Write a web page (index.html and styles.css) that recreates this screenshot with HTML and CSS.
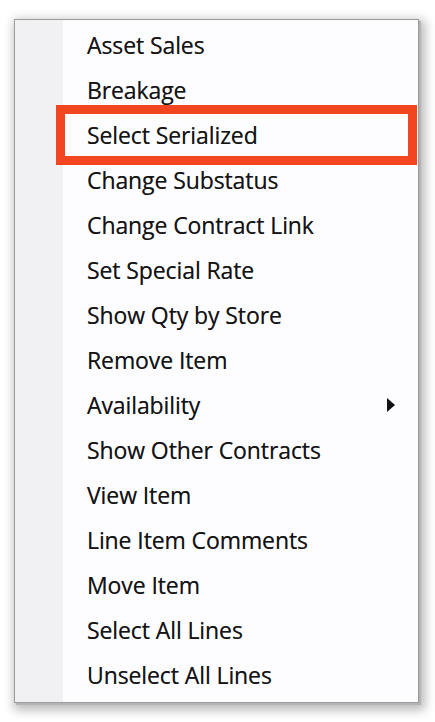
FILE: index.html
```html
<!DOCTYPE html>
<html>
<head>
<meta charset="utf-8">
<link rel="stylesheet" href="styles.css">
</head>
<body>
<div class="menu">
  <div class="gutter"></div>
  <ul class="items">
    <li class="item">Asset Sales</li>
    <li class="item">Breakage</li>
    <li class="item">Select Serialized</li>
    <li class="item">Change Substatus</li>
    <li class="item">Change Contract Link</li>
    <li class="item">Set Special Rate</li>
    <li class="item">Show Qty by Store</li>
    <li class="item">Remove Item</li>
    <li class="item has-sub">Availability<span class="arrow"></span></li>
    <li class="item">Show Other Contracts</li>
    <li class="item">View Item</li>
    <li class="item">Line Item Comments</li>
    <li class="item">Move Item</li>
    <li class="item">Select All Lines</li>
    <li class="item">Unselect All Lines</li>
  </ul>
  <div class="highlight"></div>
</div>
</body>
</html>
```
FILE: styles.css
```css
html, body {
  margin: 0;
  padding: 0;
  background: #ffffff;
}
body {
  width: 435px;
  height: 722px;
  overflow: hidden;
  font-family: "Open Sans", "Noto Sans", sans-serif;
}
.menu {
  position: relative;
  margin: 19px 0 0 14px;
  width: 403px;
  height: 682px;
  border: 1px solid #9c9c9c;
  background: #fdfcfe;
  display: flex;
  box-shadow: 2px 2px 0 0 #b4b4b4, 3px 4px 10px 3px rgba(0,0,0,0.28);
}
.gutter {
  width: 48px;
  flex: none;
  background: #f1f1f3;
}
.items {
  list-style: none;
  margin: 0;
  padding: 2px 0 0 24px;
  flex: 1;
}
.item {
  height: 45px;
  display: flex;
  align-items: center;
  font-size: 23px;
  color: #141414;
  letter-spacing: -0.1px;
  text-shadow: 0 0 0.6px rgba(20,20,20,0.6);
}
.has-sub {
  justify-content: space-between;
  padding-right: 23px;
}
.arrow {
  width: 0;
  height: 0;
  border-top: 7px solid transparent;
  border-bottom: 7px solid transparent;
  border-left: 8px solid #111;
}
.highlight {
  position: absolute;
  left: 41px;
  top: 85px;
  width: 343px;
  height: 42px;
  border: 9px solid #f1461f;
}
```
